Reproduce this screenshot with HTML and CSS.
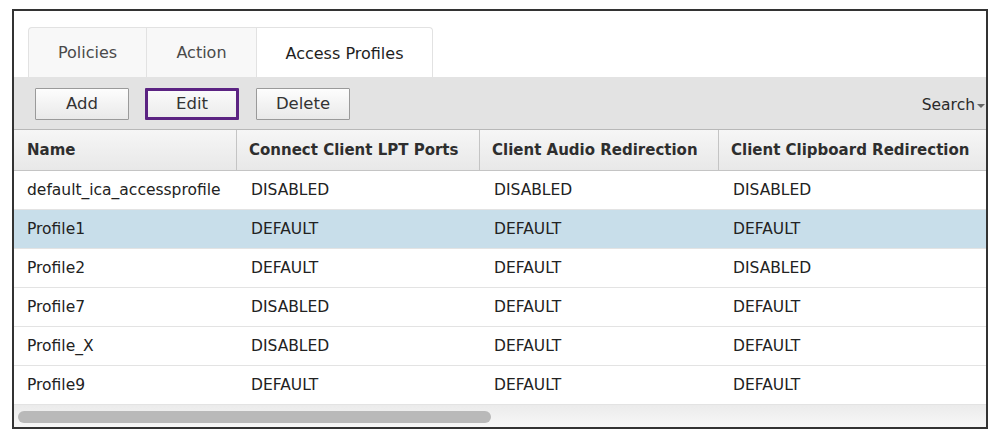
FILE: index.html
```html
<!DOCTYPE html>
<html>
<head>
<meta charset="utf-8">
<link rel="stylesheet" href="styles.css">
</head>
<body>
<div class="frame">
  <div class="tabs">
    <div class="tab">Policies</div>
    <div class="tab">Action</div>
    <div class="tab active">Access Profiles</div>
  </div>
  <div class="toolbar">
    <button class="btn">Add</button>
    <button class="btn selected">Edit</button>
    <button class="btn">Delete</button>
    <div class="search">Search<span class="caret"></span></div>
  </div>
  <div class="grid">
    <div class="row head">
      <div class="c c1">Name</div>
      <div class="c c2">Connect Client LPT Ports</div>
      <div class="c c3">Client Audio Redirection</div>
      <div class="c c4">Client Clipboard Redirection</div>
    </div>
    <div class="row">
      <div class="c c1">default_ica_accessprofile</div>
      <div class="c c2">DISABLED</div>
      <div class="c c3">DISABLED</div>
      <div class="c c4">DISABLED</div>
    </div>
    <div class="row hl">
      <div class="c c1">Profile1</div>
      <div class="c c2">DEFAULT</div>
      <div class="c c3">DEFAULT</div>
      <div class="c c4">DEFAULT</div>
    </div>
    <div class="row">
      <div class="c c1">Profile2</div>
      <div class="c c2">DEFAULT</div>
      <div class="c c3">DEFAULT</div>
      <div class="c c4">DISABLED</div>
    </div>
    <div class="row">
      <div class="c c1">Profile7</div>
      <div class="c c2">DISABLED</div>
      <div class="c c3">DEFAULT</div>
      <div class="c c4">DEFAULT</div>
    </div>
    <div class="row">
      <div class="c c1">Profile_X</div>
      <div class="c c2">DISABLED</div>
      <div class="c c3">DEFAULT</div>
      <div class="c c4">DEFAULT</div>
    </div>
    <div class="row">
      <div class="c c1">Profile9</div>
      <div class="c c2">DEFAULT</div>
      <div class="c c3">DEFAULT</div>
      <div class="c c4">DEFAULT</div>
    </div>
  </div>
  <div class="scroll"><div class="thumb"></div></div>
</div>
</body>
</html>
```
FILE: styles.css
```css
* { box-sizing: border-box; }
html, body { margin: 0; padding: 0; background: #fff; }
body {
  font-family: "DejaVu Sans", Verdana, sans-serif;
  font-size: 15px;
  color: #222;
  padding: 9px 0 0 12px;
}
.frame {
  width: 976px;
  height: 420px;
  border: 2px solid #333;
  display: flex;
  flex-direction: column;
  overflow: hidden;
  background: #fff;
}
.tabs {
  display: flex;
  padding: 16px 0 0 14px;
  height: 66px;
}
.tab {
  height: 50px;
  display: flex;
  align-items: center;
  justify-content: center;
  background: #f8f8f8;
  border: 1px solid #e2e2e2;
  border-bottom: none;
  color: #4a4a4a;
  font-size: 16px;
}
.tab:nth-child(1) { width: 118px; border-top-left-radius: 4px; border-right: none; }
.tab:nth-child(2) { width: 110px; border-right: none; }
.tab.active {
  width: 177px;
  background: #fff;
  color: #1e1e1e;
  padding-top: 2px;
  border-top-right-radius: 4px;
}
.toolbar {
  height: 52px;
  background: #e3e3e3;
  display: flex;
  align-items: center;
  padding: 1px 0 0 21px;
  gap: 16px;
}
.btn {
  font-family: inherit;
  font-size: 16.5px;
  color: #333;
  width: 94px;
  height: 32px;
  border: 1px solid #9a9a9a;
  background: linear-gradient(#fdfdfd, #e9e9e9);
  border-radius: 1px;
  padding: 0;
  margin: 0;
}
.btn.selected {
  border: 3px solid #5b2382;
  background: linear-gradient(#fafafa, #ececec);
}
.btn:last-of-type { margin-left: 1px; }
.search {
  margin-left: auto;
  font-size: 15.5px;
  color: #2a2a2a;
  display: flex;
  align-items: center;
  padding-top: 2px;
}
.caret {
  display: inline-block;
  width: 0;
  height: 0;
  border-left: 4px solid transparent;
  border-right: 4px solid transparent;
  border-top: 4px solid #666;
  margin: 3px 1px 0 2px;
}
.grid { display: flex; flex-direction: column; }
.row {
  display: flex;
  height: 39px;
  border-bottom: 1px solid #e3e3e3;
  align-items: stretch;
  font-size: 15.5px;
}
.row.head {
  height: 42px;
  border-top: 1px solid #b8b8b8;
  border-bottom: 1px solid #c4c4c4;
  background: linear-gradient(#f6f6f6, #e8e8e8);
  font-weight: bold;
  font-size: 15px;
  color: #2e2e2e;
}
.row.hl { background: #c8deea; }
.c {
  display: flex;
  align-items: center;
  padding-left: 13px;
  white-space: nowrap;
  flex: none;
}
.c1 { width: 223px; }
.c2 { width: 243px; }
.c3 { width: 239px; }
.c4 { width: 269px; }
.head .c1, .head .c2, .head .c3 { border-right: 1px solid #c4c4c4; }
.head .c2, .head .c3, .head .c4 { padding-left: 12px; }
.row:not(.head) .c2, .row:not(.head) .c3, .row:not(.head) .c4 { padding-left: 14px; }
.scroll {
  flex: 1;
  background: linear-gradient(#ebebeb, #f7f7f7);
  padding: 6px 0 0 4px;
}
.thumb {
  width: 473px;
  height: 12px;
  border-radius: 6px;
  background: #b9b9b9;
}
```
